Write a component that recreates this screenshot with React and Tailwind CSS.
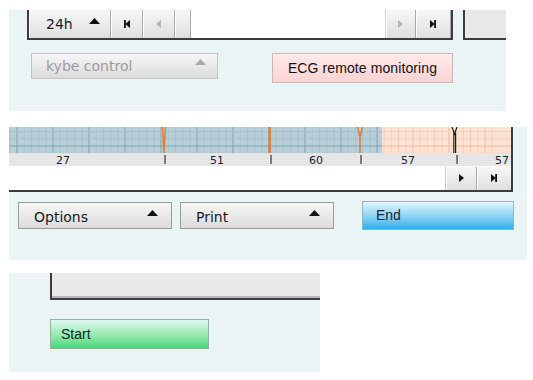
import React from "react";

const Up = ({ color = "#111", className = "" }) => (
  <svg width="11" height="6" viewBox="0 0 11 6" className={className}>
    <polygon points="0,6 5.5,0 11,6" fill={color} />
  </svg>
);

const SkipStart = ({ color = "#111" }) => (
  <svg width="6" height="8" viewBox="0 0 6 8">
    <rect x="0" y="0" width="1.8" height="8" fill={color} />
    <polygon points="1.2,4 6,0 6,8" fill={color} />
  </svg>
);

const SkipEnd = ({ color = "#111" }) => (
  <svg width="6" height="8" viewBox="0 0 6 8">
    <rect x="4.2" y="0" width="1.8" height="8" fill={color} />
    <polygon points="4.8,4 0,0 0,8" fill={color} />
  </svg>
);

const Play = ({ color = "#111", left = false }) => (
  <svg width="5" height="8" viewBox="0 0 5 8">
    <polygon points={left ? "5,0 0,4 5,8" : "0,0 5,4 0,8"} fill={color} />
  </svg>
);

const bevel =
  "flex items-center bg-linear-to-b from-[#f7f7f7] to-[#dfdfdf] border-r border-[#a8a8a8] shadow-[inset_1px_0_0_#ffffff]";
const tbBtn = bevel + " justify-center";

const dropBtn =
  "flex items-center justify-between bg-linear-to-b from-[#f6f6f6] to-[#dcdcdc] border text-[14px]";

// ECG strip geometry (relative to strip left at x=9)
const BLUE_END = 373;
const W = 502;
const GRID_H = 26;

const minorX = Array.from({ length: 72 }, (_, i) => 8 + i * 7.2 - 36);
const minorY = [4.6, 11.8, 19, 26.2];

function EcgStrip() {
  return (
    <svg width={W} height="39" viewBox={`0 0 ${W} 39`} className="block">
      <rect x="0" y="0" width={BLUE_END} height={GRID_H} fill="#b8cfd8" />
      <rect x={BLUE_END} y="0" width={W - BLUE_END} height={GRID_H} fill="#fde3d3" />
      {minorX.map((x, i) => {
        if (x < 0 || x > W) return null;
        const major = i % 5 === 0;
        const blue = x < BLUE_END;
        return (
          <line
            key={"v" + i}
            x1={x}
            x2={x}
            y1="0"
            y2={GRID_H}
            stroke={blue ? (major ? "#7fa3b0" : "#a6c2cd") : major ? "#f1b89c" : "#f8cfbb"}
            strokeWidth="1"
          />
        );
      })}
      {minorY.map((y, i) => (
        <React.Fragment key={"h" + i}>
          <line x1="0" x2={BLUE_END} y1={y} y2={y} stroke={y === 19 ? "#7fa3b0" : "#a6c2cd"} />
          <line x1={BLUE_END} x2={W} y1={y} y2={y} stroke={y === 19 ? "#f1b89c" : "#f8cfbb"} />
        </React.Fragment>
      ))}
      {/* beats */}
      <path d="M153.5 0 L155 26 L156.5 0" fill="none" stroke="#e57a2c" strokeWidth="1.4" />
      <rect x="259.5" y="0" width="2.4" height={GRID_H} fill="#e57a2c" />
      <path d="M348.5 0 L351 10 L353.5 0 M351 10 L351 26" fill="none" stroke="#e57a2c" strokeWidth="1.5" />
      <path d="M443 0 L445.5 7 L448 0 M444.8 6 L444.8 26 M446.6 6 L446.6 26" fill="none" stroke="#111" strokeWidth="1.1" />
      {/* label row */}
      <rect x="0" y={GRID_H} width={W} height="13" fill="#e6e6e6" />
      {[156, 262, 352, 448].map((x) => (
        <line key={x} x1={x} x2={x} y1="28" y2="37" stroke="#111" strokeWidth="1" />
      ))}
      {[
        [54, "27", "middle"],
        [208, "51", "middle"],
        [307, "60", "middle"],
        [399, "57", "middle"],
        [500, "57", "end"],
      ].map(([x, t, a], i) => (
        <text
          key={i}
          x={x}
          y="37"
          textAnchor={a}
          fontSize="11"
          fontFamily="DejaVu Sans, sans-serif"
          fill="#222"
        >
          {t}
        </text>
      ))}
    </svg>
  );
}

export default function App() {
  return (
    <div className="w-[533px] h-[380px] bg-white overflow-hidden font-['DejaVu_Sans',sans-serif] text-[#1a1a1a]">
      <div className="pt-[10px] pl-[9px] flex flex-col">
        {/* panel 1 */}
        <div className="w-[497px] h-[101px] bg-[#eaf4f4] flex flex-col">
          <div className="flex">
            <div className="ml-[18px] flex h-[30px] w-[426px] border-l-2 border-r-2 border-b-2 border-[#3c3c3c] bg-[#e4e4e4]">
              <div className={bevel + " w-[82px] justify-between pl-[17px] pr-[10px] text-[14px]"}>
                <span>24h</span>
                <Up className="mb-[6px]" />
              </div>
              <div className={tbBtn + " w-[32px]"}>
                <SkipStart />
              </div>
              <div className={tbBtn + " w-[32px]"}>
                <Play left color="#b4b4b4" />
              </div>
              <div className={tbBtn + " w-[16px]"} />
              <div className="flex-1 bg-white" />
              <div className={tbBtn + " w-[31px] border-l border-l-[#d0d0d0]"}>
                <Play color="#b4b4b4" />
              </div>
              <div className={tbBtn + " w-[35px]"}>
                <SkipEnd />
              </div>
            </div>
            <div className="ml-[10px] flex-1 h-[30px] border-l-2 border-b-2 border-[#3c3c3c] bg-[#e8e8e8]" />
          </div>
          <div className="flex items-start mt-[13px]">
            <div className={dropBtn + " ml-[22px] w-[187px] h-[26px] pl-[14px] pr-[11px] border-[#c2c2c2] text-[#9c9c9c]"}>
              <span>kybe control</span>
              <Up color="#a8a8a8" className="mb-[8px]" />
            </div>
            <div className="ml-[54px] w-[181px] h-[30px] flex items-center justify-center bg-linear-to-b from-[#ffe9e9] to-[#fbd3d3] border border-[#c9b8b8] font-['Liberation_Sans',sans-serif] text-[14px] text-[#111] tracking-[0.1px]">
              ECG remote monitoring
            </div>
          </div>
        </div>

        {/* panel 2 */}
        <div className="mt-[16px] w-[518px] h-[133px] bg-[#eaf4f4] flex flex-col">
          <div className="w-[504px] bg-white border-r-2 border-b-2 border-[#3c3c3c]">
            <EcgStrip />
            <div className="h-[24px] flex justify-end items-center">
              <div className={tbBtn + " w-[32px] h-[23px] border-l border-l-[#c8c8c8]"}>
                <Play />
              </div>
              <div className={tbBtn + " w-[34px] h-[23px] border-r-0"}>
                <SkipEnd />
              </div>
            </div>
          </div>
          <div className="flex items-start mt-[9px]">
            <div className={dropBtn + " mt-[1px] ml-[9px] w-[154px] h-[27px] pl-[15px] pr-[13px] border-[#9a9a9a]"}>
              <span className="mt-[3px]">Options</span>
              <Up className="mb-[6px]" />
            </div>
            <div className={dropBtn + " mt-[1px] ml-[8px] w-[154px] h-[27px] pl-[15px] pr-[13px] border-[#9a9a9a]"}>
              <span className="mt-[3px]">Print</span>
              <Up className="mb-[6px]" />
            </div>
            <div className="ml-[28px] w-[152px] h-[29px] flex items-center pl-[13px] bg-linear-to-b from-[#e2f6fd] to-[#1cb0e9] border border-[#8fb4c4] font-['Liberation_Sans',sans-serif] text-[14px] text-[#0d2b3c]">
              End
            </div>
          </div>
        </div>

        {/* panel 3 */}
        <div className="mt-[13px] w-[311px] h-[99px] bg-[#eaf4f4] flex flex-col">
          <div className="ml-[41px] h-[27px] bg-[#e9e9e9] border-l-2 border-b-2 border-[#3c3c3c] shadow-[inset_0_-2px_0_#b8b8b8]" />
          <div className="ml-[41px] mt-[19px] w-[159px] h-[30px] flex items-center pl-[10px] bg-linear-to-b from-[#e0f8f0] to-[#3ed878] border border-[#8fb59c] font-['Liberation_Sans',sans-serif] text-[14px] text-[#0d2a16]">
            Start
          </div>
        </div>
      </div>
    </div>
  );
}
